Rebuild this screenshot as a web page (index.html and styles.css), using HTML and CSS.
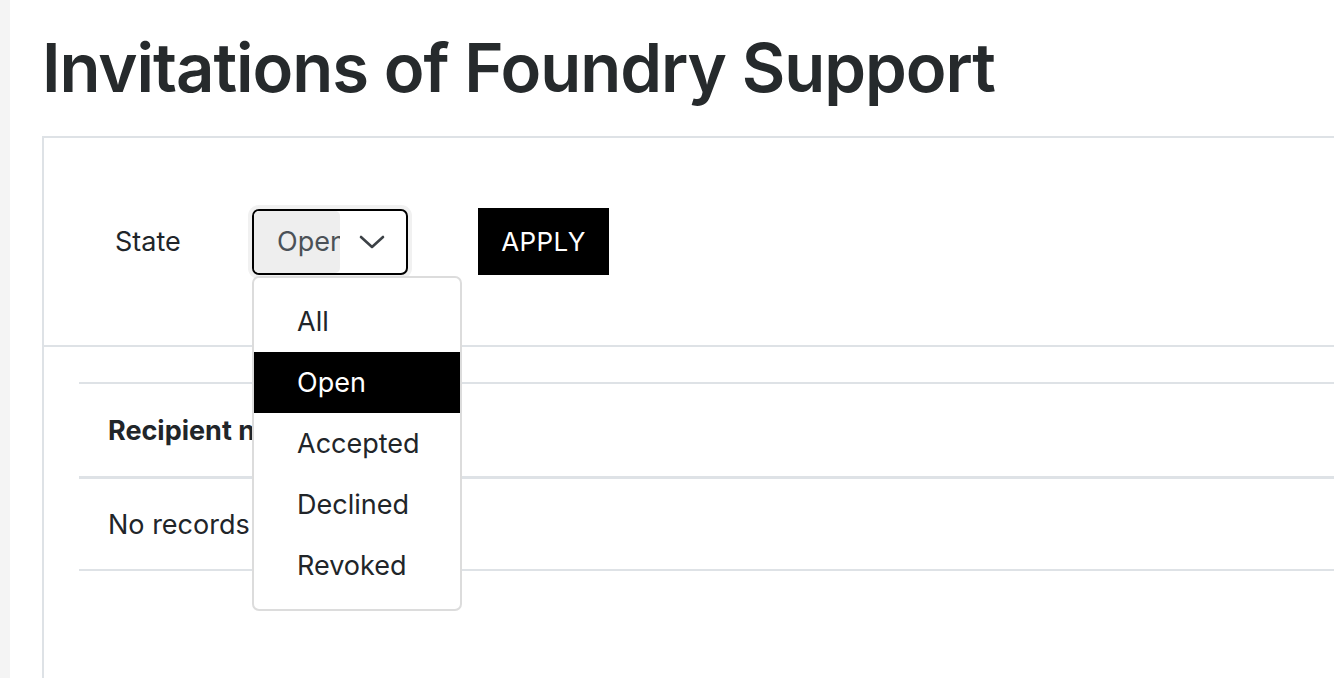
FILE: index.html
```html
<!DOCTYPE html>
<html lang="en">
<head>
<meta charset="utf-8">
<title>Invitations of Foundry Support</title>
<link rel="stylesheet" href="styles.css">
</head>
<body>
<div class="layout">
  <aside class="rail"></aside>
  <main class="main">
    <h1 class="title">Invitations of Foundry Support</h1>
    <section class="card">
      <form class="filters">
        <label class="filter-label">State</label>
        <div class="select-wrap">
          <div class="select">
            <span class="select-value">Open</span>
            <svg class="chevron" width="26" height="16" viewBox="0 0 26 16"><path d="M2 3 L13 13 L24 3" fill="none" stroke="#3c4146" stroke-width="2.6" stroke-linecap="round" stroke-linejoin="round"/></svg>
          </div>
          <ul class="menu">
            <li class="menu-item">All</li>
            <li class="menu-item active">Open</li>
            <li class="menu-item">Accepted</li>
            <li class="menu-item">Declined</li>
            <li class="menu-item">Revoked</li>
          </ul>
        </div>
        <button class="apply" type="button">APPLY</button>
      </form>
      <div class="table-area">
        <table class="table">
          <thead>
            <tr><th class="col-name">Recipient name</th><th>Email</th></tr>
          </thead>
          <tbody>
            <tr><td class="col-name">No records found</td><td></td></tr>
          </tbody>
        </table>
      </div>
    </section>
  </main>
</div>
</body>
</html>
```
FILE: styles.css
```css
html, body {
  margin: 0;
  padding: 0;
  width: 1334px;
  height: 678px;
  overflow: hidden;
  background: #fff;
}
body {
  font-family: Inter, "Noto Sans", "Liberation Sans", sans-serif;
  color: #212529;
}
.layout {
  display: flex;
  height: 678px;
}
.rail {
  width: 10px;
  flex: none;
  background: #f4f4f4;
}
.main {
  flex: none;
  width: 1500px;
  padding-left: 32px;
}
.title {
  margin: 27px 0 27px 0;
  font-size: 67px;
  line-height: 82px;
  font-weight: 600;
  color: #262a2c;
  letter-spacing: -1.05px;
}
.card {
  border-top: 2px solid #dee2e6;
  border-left: 2px solid #dee2e6;
  height: 600px;
}
.filters {
  display: flex;
  align-items: center;
  padding: 70px 0 70px 71px;
  border-bottom: 2px solid #dee2e6;
  height: 67px;
}
.filter-label {
  width: 137px;
  font-size: 27px;
  color: #212529;
}
.select-wrap {
  position: relative;
  width: 156px;
  height: 66px;
}
.select {
  box-sizing: border-box;
  width: 156px;
  height: 66px;
  border: 2px solid #000;
  border-radius: 7px;
  box-shadow: 0 0 0 4px #f1f1f1;
  display: flex;
  align-items: center;
  background: #fff;
}
.select-value {
  width: 86px;
  height: 62px;
  box-sizing: border-box;
  padding-left: 23px;
  background: #eeeeee;
  border-radius: 5px;
  font-size: 27px;
  line-height: 62px;
  color: #4b5157;
  overflow: hidden;
  white-space: nowrap;
}
.chevron {
  margin-left: 19px;
}
.menu {
  position: absolute;
  left: 0;
  top: 67px;
  width: 210px;
  box-sizing: border-box;
  margin: 0;
  padding: 13px 0;
  list-style: none;
  border: 2px solid #dcdcdc;
  border-radius: 7px;
  background: #fff;
  z-index: 10;
}
.menu-item {
  height: 61px;
  line-height: 61px;
  padding-left: 43px;
  font-size: 27px;
  color: #212529;
}
.menu-item.active {
  background: #000;
  color: #fff;
}
.apply {
  margin-left: 70px;
  width: 131px;
  height: 67px;
  background: #000;
  color: #fff;
  border: none;
  border-radius: 0;
  font-family: Inter, "Noto Sans", "Liberation Sans", sans-serif;
  font-size: 26px;
  letter-spacing: 0.4px;
}
.table-area {
  padding: 35px 0 0 35px;
}
.table {
  border-collapse: collapse;
  border-top: 2px solid #dee2e6;
}
.table th {
  text-align: left;
  font-size: 27px;
  font-weight: 700;
  height: 92px;
  padding: 0 0 0 29px;
  border-bottom: 3px solid #dee2e6;
  white-space: nowrap;
  color: #212529;
}
.table th.col-name, .table td.col-name {
  width: 1196px;
}
.table th:last-child, .table td:last-child {
  width: 200px;
}
.table td {
  font-size: 27px;
  height: 90px;
  padding: 0 0 0 29px;
  border-bottom: 2px solid #dee2e6;
  white-space: nowrap;
}
```
